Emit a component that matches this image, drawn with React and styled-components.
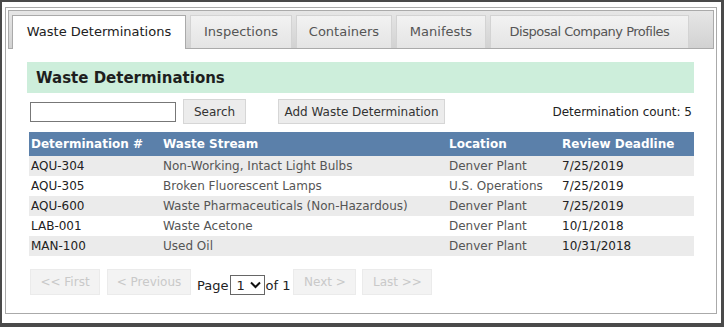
import React from 'react';
import styled, { createGlobalStyle } from 'styled-components';

const GlobalStyle = createGlobalStyle`
  html, body { margin: 0; padding: 0; background: #fff; }
  body { font-family: "DejaVu Sans", Verdana, sans-serif; }
`;

const Frame = styled.div`
  width: 724px;
  height: 327px;
  box-sizing: border-box;
  border-style: solid;
  border-color: #4a4a4a;
  border-width: 2px 3px 4px 2px;
  background: #fff;
  display: flex;
  padding: 5px 4px 9px 3px;
`;

const Panel = styled.div`
  flex: 1;
  border: 1px solid #aaa;
  padding: 2px;
  display: flex;
  flex-direction: column;
`;

const TabBar = styled.ul`
  list-style: none;
  margin: 0;
  padding: 4px 3px 0;
  border: 1px solid #aaa;
  background: linear-gradient(#e6e6e6, #d2d2d2);
  display: flex;
  align-items: flex-end;
  gap: 4px;
`;

const Tab = styled.li`
  width: ${p => p.$w}px;
  box-sizing: border-box;
  text-align: center;
  font-size: 13px;
  line-height: 17px;
  padding: 7px 0 ${p => (p.$active ? '9px' : '8px')};
  margin-bottom: ${p => (p.$active ? '-1px' : '0')};
  border: 1px solid ${p => (p.$active ? '#aaa' : '#d3d3d3')};
  border-bottom: 0;
  background: ${p => (p.$active ? '#fff' : 'linear-gradient(#f2f2f2, #e4e4e4)')};
  color: ${p => (p.$active ? '#212121' : '#555')};
  white-space: nowrap;
  letter-spacing: ${p => p.$tight || 0}px;
`;

const Content = styled.div`
  padding: 13px 20px 0 19px;
`;

const TitleBar = styled.h2`
  margin: 0;
  height: 31px;
  display: flex;
  align-items: center;
  padding-left: 9px;
  background: #cdeedb;
  color: #1e1e1e;
  font-size: 15px;
  font-weight: bold;
`;

const Toolbar = styled.div`
  display: flex;
  align-items: center;
  margin-top: 6px;
  height: 25px;
`;

const SearchInput = styled.input`
  width: 146px;
  height: 20px;
  box-sizing: border-box;
  border: 1px solid #777;
  margin: 0 0 0 3px;
  padding: 0 3px;
`;

const Button = styled.button`
  width: ${p => p.$w}px;
  height: 25px;
  box-sizing: border-box;
  margin-left: ${p => p.$gap || 0}px;
  padding: 0;
  white-space: nowrap;
  font-family: inherit;
  font-size: 12px;
  color: #333;
  background: #ececec;
  border: 1px solid #d6d6d6;
  border-radius: 0;
`;

const Count = styled.span`
  margin-left: auto;
  margin-right: 2px;
  font-size: 12px;
  color: #222;
`;

const Table = styled.table`
  width: calc(100% - 2px);
  margin: 8px 0 0 2px;
  border-collapse: collapse;
  table-layout: fixed;
  font-size: 12px;
`;

const Th = styled.th`
  height: 24px;
  padding: 0 0 0 2px;
  background: #5b80aa;
  color: #fff;
  font-weight: bold;
  text-align: left;
  white-space: nowrap;
`;

const Row = styled.tr`
  background: ${p => (p.$odd ? '#ebebeb' : '#fff')};
`;

const Td = styled.td`
  height: 20px;
  padding: 0 0 0 2px;
  color: ${p => (p.$muted ? '#555' : '#222')};
  white-space: nowrap;
`;

const Pager = styled.div`
  display: flex;
  align-items: flex-end;
  margin: 13px 0 0 3px;
  font-size: 13px;
  color: #222;
`;

const PageButton = styled.button`
  width: ${p => p.$w}px;
  height: 26px;
  margin-right: ${p => p.$mr}px;
  font-family: inherit;
  font-size: 12px;
  color: #c9c9c9;
  background: #f3f3f3;
  border: 1px solid #ebebeb;
  border-radius: 0;
  padding: 0;
`;

const Label = styled.span`
  line-height: 18px;
  margin-right: ${p => p.$mr}px;
`;

const Select = styled.div`
  width: 35px;
  height: 20px;
  box-sizing: border-box;
  border: 1px solid #666;
  display: flex;
  align-items: center;
  justify-content: space-between;
  padding: 0 3px 0 5px;
  font-size: 13px;
  color: #222;
`;

const rows = [
  ['AQU-304', 'Non-Working, Intact Light Bulbs', 'Denver Plant', '7/25/2019'],
  ['AQU-305', 'Broken Fluorescent Lamps', 'U.S. Operations', '7/25/2019'],
  ['AQU-600', 'Waste Pharmaceuticals (Non-Hazardous)', 'Denver Plant', '7/25/2019'],
  ['LAB-001', 'Waste Acetone', 'Denver Plant', '10/1/2018'],
  ['MAN-100', 'Used Oil', 'Denver Plant', '10/31/2018'],
];

const tabs = [
  { label: 'Waste Determinations', w: 174 },
  { label: 'Inspections', w: 102 },
  { label: 'Containers', w: 96 },
  { label: 'Manifests', w: 90 },
  { label: 'Disposal Company Profiles', w: 199, tight: -0.5 },
];

export default function App() {
  return (
    <>
      <GlobalStyle />
      <Frame>
        <Panel>
          <TabBar>
            {tabs.map((t, i) => (
              <Tab key={t.label} $w={t.w} $tight={t.tight} $active={i === 0}>{t.label}</Tab>
            ))}
          </TabBar>
          <Content>
            <TitleBar>Waste Determinations</TitleBar>
            <Toolbar>
              <SearchInput />
              <Button $gap={7} $w={63}>Search</Button>
              <Button $gap={32} $w={167}>Add Waste Determination</Button>
              <Count>Determination count: 5</Count>
            </Toolbar>
            <Table>
              <colgroup>
                <col style={{ width: 132 }} />
                <col style={{ width: 286 }} />
                <col style={{ width: 113 }} />
                <col />
              </colgroup>
              <thead>
                <tr>
                  <Th>Determination #</Th>
                  <Th>Waste Stream</Th>
                  <Th>Location</Th>
                  <Th>Review Deadline</Th>
                </tr>
              </thead>
              <tbody>
                {rows.map((r, i) => (
                  <Row key={r[0]} $odd={i % 2 === 0}>
                    <Td>{r[0]}</Td>
                    <Td $muted>{r[1]}</Td>
                    <Td $muted>{r[2]}</Td>
                    <Td>{r[3]}</Td>
                  </Row>
                ))}
              </tbody>
            </Table>
            <Pager>
              <PageButton $w={70} $mr={7} disabled>&lt;&lt; First</PageButton>
              <PageButton $w={84} $mr={6} disabled>&lt; Previous</PageButton>
              <Label $mr={2}>Page</Label>
              <Select>
                <span>1</span>
                <svg width="11" height="8" viewBox="0 0 11 8">
                  <path d="M1 1.5 L5.5 6 L10 1.5" fill="none" stroke="#111" strokeWidth="2" />
                </svg>
              </Select>
              <Label $mr={3}>of 1</Label>
              <PageButton $w={63} $mr={6} disabled>Next &gt;</PageButton>
              <PageButton $w={70} $mr={0} disabled>Last &gt;&gt;</PageButton>
            </Pager>
          </Content>
        </Panel>
      </Frame>
    </>
  );
}
